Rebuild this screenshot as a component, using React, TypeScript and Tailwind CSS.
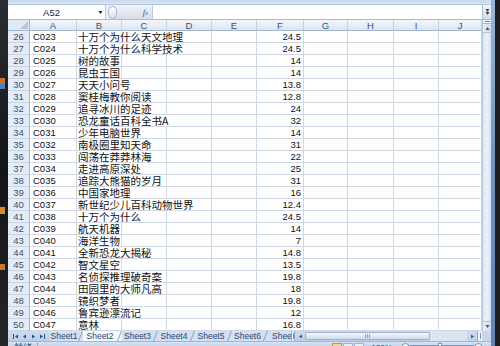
import React from 'react';

const rows: [number, string, string, string][] = [
  [26, 'C023', '十万个为什么天文地理', '24.5'],
  [27, 'C024', '十万个为什么科学技术', '24.5'],
  [28, 'C025', '树的故事', '14'],
  [29, 'C026', '昆虫王国', '14'],
  [30, 'C027', '天天小问号', '13.8'],
  [31, 'C028', '窦桂梅教你阅读', '12.8'],
  [32, 'C029', '追寻冰川的足迹', '24'],
  [33, 'C030', '恐龙童话百科全书A', '32'],
  [34, 'C031', '少年电脑世界', '14'],
  [35, 'C032', '南极圈里知天命', '31'],
  [36, 'C033', '闯荡在莽莽林海', '22'],
  [37, 'C034', '走进高原深处', '25'],
  [38, 'C035', '追踪大熊猫的岁月', '31'],
  [39, 'C036', '中国家地理', '16'],
  [40, 'C037', '新世纪少儿百科动物世界', '12.4'],
  [41, 'C038', '十万个为什么', '24.5'],
  [42, 'C039', '航天机器', '14'],
  [43, 'C040', '海洋生物', '7'],
  [44, 'C041', '全新恐龙大揭秘', '14.8'],
  [45, 'C042', '智文星空', '13.5'],
  [46, 'C043', '名侦探推理破奇案', '19.8'],
  [47, 'C044', '田园里的大师凡高', '18'],
  [48, 'C045', '镜织梦者', '19.8'],
  [49, 'C046', '鲁宾逊漂流记', '12'],
  [50, 'C047', '意林', '16.8'],
];

const cols = ['A', 'B', 'C', 'D', 'E', 'F', 'G', 'H', 'I', 'J'];

const latin = "font-['Liberation_Sans',sans-serif] text-[9.5px] leading-[11px]";
const cjk = "font-['Noto_Sans_CJK_SC',sans-serif] text-[10.5px] leading-[11px]";
const cell = 'h-[12px] border-r border-b border-[#d0d7e5] bg-white';

// tiny arrow glyph used by scrollbars and the tab navigator
function Tri({ dir, color = '#3d5a86' }: { dir: 'up' | 'down' | 'left' | 'right'; color?: string }) {
  const pts = {
    up: '0.5,4 2.5,1 4.5,4',
    down: '0.5,1 2.5,4 4.5,1',
    left: '4,0.5 1,2.5 4,4.5',
    right: '1,0.5 4,2.5 1,4.5',
  }[dir];
  return (
    <svg width="5" height="5" viewBox="0 0 5 5" className="block">
      <polygon points={pts} fill={color} />
    </svg>
  );
}

function Slant() {
  return (
    <svg width="5" height="10" viewBox="0 0 5 10" className="block shrink-0">
      <line x1="0.5" y1="10" x2="4.5" y2="0" stroke="#8aa2c6" strokeWidth="1" />
    </svg>
  );
}

const tabs = [
  { name: 'Sheet1', w: 'w-[33px]' },
  { name: 'Sheet2', w: 'w-[39px]', active: true },
  { name: 'Sheet3', w: 'w-[36px]' },
  { name: 'Sheet4', w: 'w-[37px]' },
  { name: 'Sheet5', w: 'w-[37px]' },
  { name: 'Sheet6', w: 'w-[36px]' },
];

const tabText = "font-['Liberation_Sans',sans-serif] text-[8.5px] leading-[9px] text-[#2a4778]";

export default function App() {
  return (
    <div className="w-[500px] h-[346px] overflow-hidden flex bg-[#16181c]">
      {/* desktop showing at the left edge */}
      <div className="w-[8px] shrink-0 flex flex-col bg-gradient-to-b from-[#2b2e34] via-[#121418] to-[#24262a]">
        <div className="h-[78px]" />
        <div className="h-[6px] bg-[#c8702a] mr-[3px]" />
        <div className="h-[5px] bg-[#4f7fc0] mr-[3px]" />
        <div className="h-[118px]" />
        <div className="h-[7px] bg-[#d08a30] mr-[3px]" />
        <div className="h-[50px]" />
        <div className="h-[6px] bg-[#c6782c] mr-[3px]" />
      </div>

      {/* excel window */}
      <div className="w-[483px] shrink-0 flex flex-col bg-white">
        {/* ribbon bottom edge */}
        <div className="h-[5px] shrink-0 bg-gradient-to-b from-[#c9d8ec] to-[#dbe6f4] border-b border-[#b3c6e0]" />

        {/* formula bar */}
        <div className="h-[15px] shrink-0 flex bg-[#eef3fa] border-b border-[#a7bcd8]">
          <div className="w-[98px] flex items-center bg-white border-r border-[#b9c9de]">
            <span className={`flex-1 text-center text-[#1d1d1d] ${latin}`}>A52</span>
            <span className="w-[10px] flex justify-center">
              <Tri dir="down" color="#222" />
            </span>
          </div>
          <div className="w-[45px] flex items-center bg-gradient-to-b from-[#f1f4f9] to-[#d6dee9] rounded-l-[7px] ml-[1px]">
            <span className="w-[9px] h-[13px] rounded-full border border-[#a9b7c9] bg-gradient-to-b from-white to-[#d9e0ea] ml-[1px]" />
            <span className="flex-1" />
            <span className="font-['Liberation_Serif',serif] italic text-[9px] leading-[10px] text-[#555] pr-[4px]">
              f<span className="text-[6px]">x</span>
            </span>
          </div>
          <div className="flex-1 bg-white border-l border-[#b9c9de]" />
          <div className="w-[9px] flex flex-col items-center justify-center bg-gradient-to-b from-[#f4f7fb] to-[#d3ddea] border-l border-[#a7bcd8]">
            <Tri dir="down" color="#445" />
            <div className="-mt-[2px]">
              <Tri dir="down" color="#445" />
            </div>
          </div>
        </div>

        {/* sheet + vertical scrollbar */}
        <div className="flex shrink-0">
          <div className="grid grid-cols-[22px_47px_45px_45px_45px_45px_47px_44px_46px_45px_43px]">
            {/* header row */}
            <div className="h-[11px] bg-[#e2eaf5] border-r border-b border-[#9eb6ce] flex items-end justify-end">
              <svg width="8" height="8" viewBox="0 0 8 8" className="block mr-[1px] mb-[1px]">
                <polygon points="8,0 8,8 0,8" fill="#b9c6d8" />
              </svg>
            </div>
            {cols.map(c => (
              <div
                key={c}
                className={`h-[11px] bg-gradient-to-b from-[#f2f6fb] to-[#dde6f2] border-r border-b border-r-[#c3d1e3] border-b-[#9eb6ce] flex items-center justify-center text-[#3e516e] ${latin}`}
              >
                {c}
              </div>
            ))}

            {rows.map(([n, code, title, price]) => (
              <React.Fragment key={n}>
                <div
                  className={`h-[12px] bg-[#e4ecf7] border-r border-b border-r-[#9eb6ce] border-b-[#c5d3e5] flex items-center justify-center text-[#3e516e] ${latin}`}
                >
                  {n}
                </div>
                <div className={`${cell} pl-[3px] flex items-center text-[#111] ${latin}`}>{code}</div>
                <div className={`${cell} pl-px flex items-start`}>
                  {/* long titles spill over C and D, hiding their gridlines like Excel */}
                  <span className={`relative z-10 shrink-0 whitespace-nowrap h-[11px] bg-white text-[#111] ${cjk}`}>
                    {title}
                  </span>
                </div>
                <div className={cell} />
                <div className={cell} />
                <div className={cell} />
                <div className={`${cell} pr-[2px] flex items-center justify-end text-[#111] ${latin}`}>{price}</div>
                <div className={cell} />
                <div className={cell} />
                <div className={cell} />
                <div className={cell} />
              </React.Fragment>
            ))}
          </div>

          <div className="w-[9px] flex flex-col bg-[#d9e4f2] border-l border-[#b2c4dd]">
            <div className="h-[4px] flex items-center justify-center bg-[#eef3fa] border-b border-[#a9bcd6]">
              <div className="w-[5px] h-px bg-[#6d84a8]" />
            </div>
            <div className="h-[9px] flex items-center justify-center bg-gradient-to-r from-[#e9eff8] to-[#cfdbec] border-b border-[#b2c4dd]">
              <Tri dir="up" />
            </div>
            <div className="flex-1 bg-gradient-to-r from-[#dfe8f4] via-[#eaf0f8] to-[#d6e1f0]" />
            <div className="h-[10px] flex items-center justify-center bg-gradient-to-r from-[#e9eff8] to-[#cfdbec] border-t border-[#b2c4dd]">
              <Tri dir="down" />
            </div>
          </div>
        </div>

        {/* sheet tabs + horizontal scrollbar */}
        <div className="h-[10px] shrink-0 flex items-stretch bg-gradient-to-b from-[#cddbed] to-[#bccfe7]">
          <div className="w-[42px] flex items-center justify-around px-[3px]">
            <span className="flex items-center">
              <span className="w-px h-[5px] bg-[#2d4f83]" />
              <Tri dir="left" color="#2d4f83" />
            </span>
            <Tri dir="left" color="#2d4f83" />
            <Tri dir="right" color="#2d4f83" />
            <span className="flex items-center">
              <Tri dir="right" color="#2d4f83" />
              <span className="w-px h-[5px] bg-[#2d4f83]" />
            </span>
          </div>
          {tabs.map(t => (
            <div
              key={t.name}
              className={`${t.w} flex items-stretch ${t.active ? 'bg-[#f7f9fd]' : 'bg-[#d3e0f1]'}`}
            >
              <span className={`flex-1 flex items-center justify-center ${tabText}`}>{t.name}</span>
              <Slant />
            </div>
          ))}
          <div className={`w-[23px] overflow-hidden bg-[#d3e0f1] flex items-center pl-[4px] whitespace-nowrap ${tabText}`}>
            Sheet7
          </div>
          <div className="w-[4px] flex justify-center items-center bg-[#eef3fa] border-x border-[#8ea6c8]">
            <div className="w-px h-[6px] bg-[#7b93b8]" />
          </div>
          <div className="w-[10px] flex items-center justify-center">
            <Tri dir="left" />
          </div>
          <div className="w-[125px] my-[1px] flex items-center justify-center gap-px bg-gradient-to-b from-[#f5f8fc] to-[#d0dbeb] border border-[#9cb1cf] rounded-[2px]">
            <span className="w-px h-[4px] bg-[#8ea3c3]" />
            <span className="w-px h-[4px] bg-[#8ea3c3]" />
            <span className="w-px h-[4px] bg-[#8ea3c3]" />
          </div>
          <div className="flex-1 bg-[#dbe5f2]" />
          <div className="w-[10px] flex items-center justify-center">
            <Tri dir="right" />
          </div>
          <div className="w-[5px] flex justify-center items-center bg-[#eef3fa] border-l border-[#8ea6c8]">
            <div className="w-px h-[6px] bg-[#7b93b8]" />
          </div>
          <div className="w-[9px] bg-[#c7d6ea]" />
        </div>

        {/* status bar, mostly cut off */}
        <div className="h-[5px] shrink-0 overflow-hidden flex items-start bg-gradient-to-b from-[#d7e3f3] to-[#c6d6ec] border-t border-[#a0b6d6]">
          <span className="ml-[6px] h-[4px] overflow-hidden font-['Noto_Sans_CJK_SC',sans-serif] text-[9px] leading-[12px] text-[#1f3d6e]">就绪</span>
          <span className="ml-[5px] w-px h-[5px] bg-[#9fb3d1]" />
          <span className="flex-1" />
          <span className="w-[10px] h-[5px] mt-[1px] bg-[#f4d58a] border border-[#c59c45]" />
          <span className="w-[10px] h-[5px] mt-[1px] ml-[1px] bg-[#e7eef8] border border-[#9fb3d1]" />
          <span className="w-[10px] h-[5px] mt-[1px] ml-[1px] bg-[#e7eef8] border border-[#9fb3d1]" />
          <span className="ml-[8px] h-[4px] overflow-hidden font-['Liberation_Sans',sans-serif] text-[8px] leading-[12px] text-[#1f3d6e]">100%</span>
          <span className="ml-[9px] w-[9px] h-[9px] mt-[1px] rounded-full border border-[#7f95b8] bg-[#eef3fa]" />
          <span className="w-[28px] h-px mt-[3px] bg-[#7f95b8]" />
          <span className="w-[4px] h-[5px] mt-[1px] bg-[#eef3fa] border border-[#7f95b8]" />
          <span className="w-[32px] h-px mt-[3px] bg-[#7f95b8]" />
          <span className="w-[9px] h-[9px] mt-[1px] rounded-full border border-[#7f95b8] bg-[#eef3fa]" />
          <span className="w-[8px]" />
        </div>
      </div>

      {/* window frame / desktop at the right edge */}
      <div className="w-[9px] shrink-0 flex">
        <div className="w-[4px] bg-gradient-to-b from-[#9db4d6] via-[#7390bd] to-[#6683b2]" />
        <div className="flex-1 bg-[#1c1e22]" />
      </div>
    </div>
  );
}
